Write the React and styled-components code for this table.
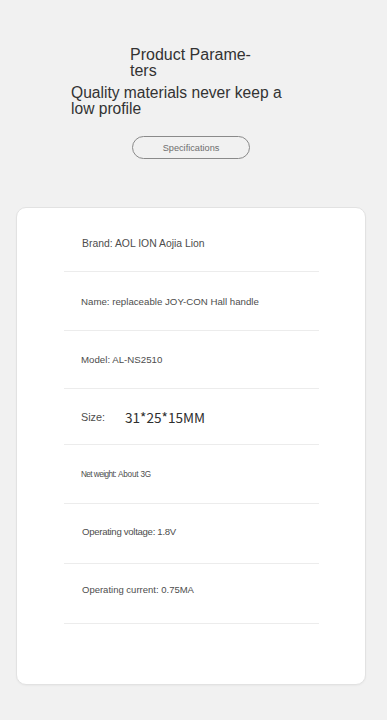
import React from 'react';
import styled, { createGlobalStyle } from 'styled-components';

const Global = createGlobalStyle`
  html, body {
    margin: 0;
    padding: 0;
    background: #f1f1f1;
    font-family: "Liberation Sans", Arial, sans-serif;
  }
`;

const Page = styled.div`
  width: 387px;
  padding-top: 47px;
  padding-bottom: 36px;
  display: flex;
  flex-direction: column;
  align-items: flex-start;
`;

const Title = styled.h1`
  margin: 0 0 0 130px;
  width: 127px;
  font-size: 16px;
  line-height: 16px;
  font-weight: 400;
  color: #333;
`;

const Subtitle = styled.h2`
  margin: 6px 0 0 71px;
  width: 225px;
  font-size: 15.6px;
  line-height: 16px;
  font-weight: 400;
  color: #333;
`;

const Pill = styled.div`
  margin: 19px 0 0 132px;
  width: 116px;
  height: 21px;
  border: 1px solid #8a8a8a;
  border-radius: 12px;
  display: flex;
  align-items: center;
  justify-content: center;
  font-size: 9.2px;
  color: #6e6e6e;
`;

const Card = styled.div`
  margin: 48px 0 0 16px;
  box-sizing: border-box;
  width: 350px;
  background: #fff;
  border: 1px solid #e2e2e2;
  border-radius: 10px;
  box-shadow: 0 1px 2px rgba(0, 0, 0, 0.04);
  padding: 0 46px 60px 47px;
`;

const Row = styled.div`
  height: ${(p) => p.h}px;
  padding: ${(p) => p.pt || 0}px 0 ${(p) => p.pb || 0}px ${(p) => p.indent || 17}px;
  border-bottom: 1px solid #ececec;
  display: flex;
  align-items: center;
  font-size: ${(p) => p.fs || 9.7}px;
  letter-spacing: ${(p) => p.ls || 0}px;
  color: #4d4d4d;
`;

const SizeValue = styled.span`
  margin-left: 20px;
  font-family: "Noto Sans CJK SC", "Noto Sans", sans-serif;
  font-size: 13.6px;
  letter-spacing: 0;
  color: #2f2f2f;
`;

const WeightLabel = styled.span`
  font-size: 8.2px;
  letter-spacing: -0.55px;
`;

const WeightValue = styled.span`
  margin-left: 2px;
  font-size: 8.2px;
  letter-spacing: -0.2px;
`;

export default function App() {
  return (
    <>
      <Global />
      <Page>
        <Title>Product Parame{'\u00AD'}ters</Title>
        <Subtitle>Quality materials never keep a low profile</Subtitle>
        <Pill>Specifications</Pill>
        <Card>
          <Row h={56} pt={7} indent={18} fs={10.4}>Brand: AOL ION Aojia Lion</Row>
          <Row h={58}>Name: replaceable JOY-CON Hall handle</Row>
          <Row h={57}>Model: AL-NS2510</Row>
          <Row h={55} fs={10.8}>
            Size:<SizeValue>31*25*15MM</SizeValue>
          </Row>
          <Row h={58}>
            <WeightLabel>Net weight:</WeightLabel>
            <WeightValue>About 3G</WeightValue>
          </Row>
          <Row h={55} pb={4} indent={18} fs={9.6} ls={-0.3}>Operating voltage: 1.8V</Row>
          <Row h={51} pb={8} indent={18} fs={9.5}>Operating current: 0.75MA</Row>
        </Card>
      </Page>
    </>
  );
}
